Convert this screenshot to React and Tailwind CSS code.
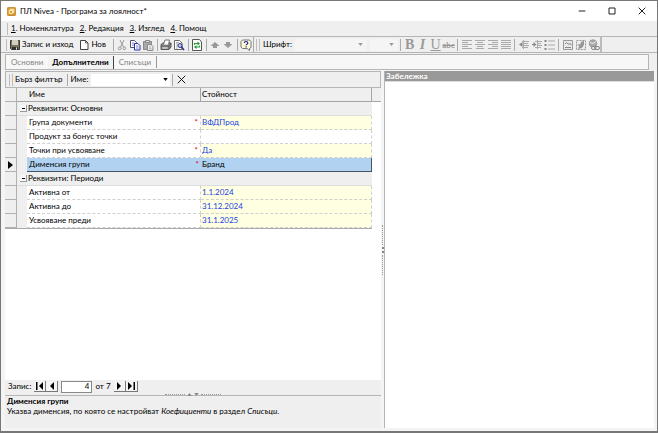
import { useState } from 'react';

const groups = [
  {
    title: 'Реквизити: Основни',
    rows: [
      { name: 'Група документи', value: 'ВФДПрод', required: true },
      { name: 'Продукт за бонус точки', value: '' },
      { name: 'Точки при усвояване', value: 'Да', required: true },
      { name: 'Дименсия групи', value: 'Бранд', required: true },
    ],
  },
  {
    title: 'Реквизити: Периоди',
    rows: [
      { name: 'Активна от', value: '1.1.2024' },
      { name: 'Активна до', value: '31.12.2024' },
      { name: 'Усвояване преди', value: '31.1.2025' },
    ],
  },
];

const Svg = ({ children, className = 'w-3 h-3' }) => (
  <svg viewBox="0 0 12 12" className={`${className} shrink-0`} fill="none" stroke="currentColor">
    {children}
  </svg>
);

const SaveIcon = () => (
  <Svg>
    <path d="M1.5 1.5h9v9h-8l-1-1z" fill="#77735c" stroke="#3a3a30" />
    <path d="M3 1h6v5H3z" fill="#d2d0bd" stroke="none" />
    <path d="M3 8h6v3H3z" fill="#33332d" stroke="none" />
    <path d="M7 8.500h1v2H7z" fill="#eee" stroke="none" />
  </Svg>
);

const NewIcon = () => (
  <Svg>
    <path d="M2.500 1.500h5l2.500 2.500v6.500H2.500z" fill="#fff" stroke="#444" />
    <path d="M7.500 1.500V4H10" stroke="#444" strokeWidth=".8" />
  </Svg>
);

const CutIcon = () => (
  <Svg>
    <path d="M4 1l3.500 7M8 1L4.500 8" stroke="#999" />
    <circle cx="3.700" cy="9.300" r="1.400" stroke="#999" />
    <circle cx="8.300" cy="9.300" r="1.400" stroke="#999" />
  </Svg>
);

const CopyIcon = () => (
  <Svg>
    <path d="M1.500 1.500h4l2 2v5h-6z" fill="#fff" stroke="#505078" />
    <path d="M5.500 4.500h3.500l2 2v4.500H5.500z" fill="#fff" stroke="#2930a5" />
    <path d="M3 4h2M3 6h2M7 7h2.500M7 9h2.500" stroke="#5961bd" strokeWidth=".8" />
  </Svg>
);

const PasteIcon = () => (
  <Svg>
    <path d="M1.500 2.500h8v8h-8z" fill="#aaa" stroke="#888" />
    <path d="M3.500 1.500h4v2h-4z" fill="#ddd" stroke="#888" />
    <path d="M5.500 5.500h3.500l2 2v4H5.500z" fill="#eee" stroke="#888" />
    <path d="M7 8h2M7 9.800h2.500" stroke="#999" strokeWidth=".8" />
  </Svg>
);

const PrintIcon = () => (
  <Svg>
    <path d="M1 5.500L3 4h8v4l-2 2.500H1z" fill="#9a9a9a" stroke="#555" />
    <path d="M3.500 5.500L5 1h4.500L8.500 5.500" fill="#fff" stroke="#555" strokeWidth=".8" />
    <path d="M1 7h8l2-2.500M9 7v3" stroke="#444" strokeWidth=".8" />
    <path d="M2.500 9h5" stroke="#e4e4e4" />
  </Svg>
);

const PreviewIcon = () => (
  <Svg>
    <path d="M1.500 1.500h5L9 4v6.500H1.500z" fill="#fff" stroke="#666" />
    <path d="M3 3.500h3M3 5h2M3 7h2M3 9h2" stroke="#888" strokeWidth=".7" />
    <circle cx="7" cy="6.500" r="2" fill="#bcd" stroke="#303795" />
    <path d="M8.500 8l2.500 3" stroke="#252b87" strokeWidth="1.500" />
  </Svg>
);

const RefreshIcon = () => (
  <Svg>
    <path d="M1.500 .5h7L10.500 3v8.500h-9z" fill="#fff" stroke="#555" />
    <path d="M3.500 6V4.500h4M8.500 6.500V8h-4" stroke="#23a138" strokeWidth="1.200" />
    <path d="M6.500 2.500l2.500 2-2.500 2zM5.500 6L3 8l2.500 2z" fill="#179a31" stroke="none" />
  </Svg>
);

const UpIcon = () => (
  <Svg>
    <path d="M6 3l4.500 4H8v2H4V7H1.500z" fill="#999" stroke="none" />
  </Svg>
);

const DownIcon = () => (
  <Svg>
    <path d="M6 9L1.500 5H4V3h4v2h2.500z" fill="#999" stroke="none" />
  </Svg>
);

const HelpIcon = () => (
  <Svg>
    <path d="M2.500 1h7l1.500 1.500v6L9.500 9.500v2L7 9.500H2.500L1 8V2.500z" fill="#fffbd2" stroke="#666" strokeWidth=".9" />
    <path d="M4.300 4c0-2 3.500-2 3.500 0 0 1.300-1.700 1.100-1.700 2.300M6.100 7.300v1.200" stroke="#2526a5" strokeWidth="1.200" />
  </Svg>
);

const alignPaths = {
  left: 'M1 1.500h10M1 3.500h6M1 5.500h10M1 7.500h6M1 9.500h10',
  center: 'M1 1.500h10M3 3.500h6M1 5.500h10M3 7.500h6M2 9.500h8',
  right: 'M1 1.500h10M5 3.500h6M1 5.500h10M5 7.500h6M1 9.500h10',
  justify: 'M1 1.500h10M1 3.500h10M1 5.500h10M1 7.500h10M1 9.500h10',
};

const AlignIcon = ({ kind }) => (
  <Svg>
    <path d={alignPaths[kind]} stroke="#aaa" />
  </Svg>
);

const OutdentIcon = () => (
  <Svg>
    <path d="M4 2.500h7M6 4.500h4M6 6.500h5M4 8.500h6M5.500 1v9" stroke="#aaa" />
    <path d="M4.500 3L1 5.500 4.500 8z" fill="#888" stroke="none" />
  </Svg>
);

const IndentIcon = () => (
  <Svg>
    <path d="M4 2.500h7M7 4.500h3M7 6.500h4M4 8.500h6M6.500 1v9" stroke="#aaa" />
    <path d="M1 5.500h2" stroke="#888" />
    <path d="M2.500 3L5.500 5.500 2.500 8z" fill="#888" stroke="none" />
  </Svg>
);

const BulletsIcon = () => (
  <Svg>
    <path d="M4 2h7M4 6h7M4 10h7" stroke="#aaa" />
    <path d="M.5 1h2v2h-2zM.5 5h2v2h-2zM.5 9h2v2h-2z" fill="#888" stroke="none" />
  </Svg>
);

const PictureIcon = () => (
  <Svg>
    <path d="M1.500 1.500h9v9h-9z" fill="#e8e8e8" stroke="#999" />
    <path d="M3 5l1.500-1.500L6 5h3v1M3 8.500h6" stroke="#888" />
  </Svg>
);

const ObjectIcon = () => (
  <Svg>
    <path d="M1.500 1.500h9v9h-9z" stroke="#999" strokeDasharray="2 1" />
    <path d="M6 3l3-1.500V6L7 9 3 10l1-3-2-2 3 .5z" fill="#999" stroke="none" />
  </Svg>
);

const LinkIcon = () => (
  <Svg>
    <circle cx="5" cy="4.500" r="3.700" fill="#aaa" stroke="#999" />
    <path d="M2 3.500l3 1 3-2" stroke="#eee" />
    <rect x="3.500" y="7.500" width="4.500" height="3" rx="1.500" fill="#eee" stroke="#888" />
    <rect x="6.500" y="7.500" width="5" height="3" rx="1.500" stroke="#888" />
  </Svg>
);

const AppIcon = () => (
  <Svg className="w-[9px] h-[9px]">
    <rect x=".5" y=".5" width="11" height="11" rx="1.500" fill="#d99a28" stroke="#b67a17" />
    <path d="M3 4.500h4.500v4H3zM4.500 4.500V3H9v4H7.500" stroke="#fff3d6" strokeWidth="1.300" />
  </Svg>
);

const Caret = ({ className = '' }) => (
  <svg viewBox="0 0 6 4" className={`w-[5px] h-[3px] shrink-0 ${className}`}>
    <path d="M0 0h6L3 4z" fill="currentColor" />
  </svg>
);

const Grip = () => <span className="w-1 h-3 shrink-0 border-x border-[#bdbdbd]" />;
const Sep = () => <span className="w-px h-3 shrink-0 mx-[2px] bg-[#aaa]" />;

const ToolButton = ({ label, children, className = 'w-[13px]' }) => (
  <button aria-label={label} className={`flex items-center justify-center shrink-0 h-[15px] ${className}`}>
    {children}
  </button>
);

const TitleBar = () => (
  <header className="flex items-center h-5 shrink-0 bg-white pl-[6px]">
    <AppIcon />
    <h1 className="ml-1 flex-1">ПЛ Nivea - Програма за лоялност*</h1>
    <div className="flex text-[#222]">
      <ToolButton label="Минимизирай" className="w-[30px]">
        <Svg className="w-2 h-2"><path d="M1 6h10" strokeWidth="1.500" /></Svg>
      </ToolButton>
      <ToolButton label="Максимизирай" className="w-[30px]">
        <Svg className="w-2 h-2"><path d="M1.500 1.500h9v9h-9z" strokeWidth="1.500" /></Svg>
      </ToolButton>
      <ToolButton label="Затвори" className="w-[30px]">
        <Svg className="w-2 h-2"><path d="M1 1l10 10M11 1L1 11" strokeWidth="1.500" /></Svg>
      </ToolButton>
    </div>
  </header>
);

const menu = ['Номенклатура', 'Редакция', 'Изглед', 'Помощ'];

const MenuBar = () => (
  <nav className="flex items-center gap-[6px] h-[15px] shrink-0 pl-[3px]">
    <span className="w-1 h-3 -mr-[3px] border-r border-[#bdbdbd]" />
    {menu.map((item, i) => (
      <button key={item}>
        <u>{i + 1}</u>. {item}
      </button>
    ))}
  </nav>
);

const Toolbar = () => (
  <div className="flex h-[17px] shrink-0 border-y border-[#b5b5b5] pl-[2px]">
    <div className="flex items-center border-r border-[#aaa]">
      <span className="w-1 h-3 border-r border-[#bdbdbd]" />
      <button className="flex items-center gap-px ml-[2px] whitespace-nowrap"><SaveIcon />Запис и изход</button>
      <button className="flex items-center gap-px ml-[5px] mr-[5px]"><NewIcon />Нов</button>
      <Sep />
      <ToolButton label="Изрежи"><CutIcon /></ToolButton>
      <ToolButton label="Копирай"><CopyIcon /></ToolButton>
      <ToolButton label="Постави"><PasteIcon /></ToolButton>
      <Sep />
      <ToolButton label="Печат"><PrintIcon /></ToolButton>
      <ToolButton label="Преглед"><PreviewIcon /></ToolButton>
      <Sep />
      <ToolButton label="Обнови"><RefreshIcon /></ToolButton>
      <Sep />
      <ToolButton label="Нагоре"><UpIcon /></ToolButton>
      <ToolButton label="Надолу"><DownIcon /></ToolButton>
      <Sep />
      <ToolButton label="Помощ"><HelpIcon /></ToolButton>
    </div>
    <div className="flex items-center border-r-2 border-[#bbb] pl-[2px] text-[#999]">
      <Grip />
      <span className="mx-[3px] text-black">Шрифт:</span>
      <button aria-label="Шрифт" className="flex items-center justify-end w-[72px] h-3 pr-1 bg-[#f5f5f5]"><Caret /></button>
      <button aria-label="Размер" className="flex items-center justify-end w-7 h-3 pr-1 ml-[3px] bg-[#f5f5f5]"><Caret /></button>
      <Sep />
      <div className="flex items-center font-['Liberation_Serif',serif] text-sm leading-none text-[#999]">
        <button className="w-[13px] font-bold">B</button>
        <button className="w-[13px] font-bold italic">I</button>
        <button className="w-[13px] underline">U</button>
        <button className="w-[13px] font-['Lato',sans-serif] text-[8px] font-bold line-through">abc</button>
      </div>
      <Sep />
      <ToolButton label="Ляво"><AlignIcon kind="left" /></ToolButton>
      <ToolButton label="Център"><AlignIcon kind="center" /></ToolButton>
      <ToolButton label="Дясно"><AlignIcon kind="right" /></ToolButton>
      <ToolButton label="Двустранно"><AlignIcon kind="justify" /></ToolButton>
      <Sep />
      <ToolButton label="Намали отстъп"><OutdentIcon /></ToolButton>
      <ToolButton label="Увеличи отстъп"><IndentIcon /></ToolButton>
      <ToolButton label="Списък"><BulletsIcon /></ToolButton>
      <Sep />
      <ToolButton label="Картина"><PictureIcon /></ToolButton>
      <ToolButton label="Обект"><ObjectIcon /></ToolButton>
      <ToolButton label="Връзка"><LinkIcon /></ToolButton>
    </div>
  </div>
);

const tabs = ['Основни', 'Допълнителни', 'Списъци'];

const Tabs = ({ active, onChange }) => (
  <div role="tablist" className="flex h-4 shrink-0 mt-px ml-1 mr-2 border border-[#b5b5b5] bg-[#f7f7f7] pt-px">
    {tabs.map((tab) => (
      <button
        key={tab}
        role="tab"
        aria-selected={tab === active}
        onClick={() => onChange(tab)}
        className={
          tab === active
            ? 'px-1 border-r border-[#444] bg-[#f2f2f2] font-bold'
            : 'px-[5px] h-3 text-[#858585] last:border-r last:border-[#999]'
        }
      >
        {tab}
      </button>
    ))}
  </div>
);

const FilterBar = () => (
  <div className="flex items-center h-[17px] shrink-0 border border-[#b5b5b5] pl-[3px]">
    <Grip />
    <button className="mx-[2px] whitespace-nowrap">Бърз филтър</button>
    <Sep />
    <label htmlFor="filter-name" className="ml-px">Име:</label>
    <div className="flex items-center w-[79px] h-3 ml-[3px] bg-white">
      <input id="filter-name" className="flex-1 min-w-0 h-3 outline-none" />
      <Caret className="mr-[2px]" />
    </div>
    <Sep />
    <ToolButton label="Изчисти">
      <Svg className="w-[9px] h-[9px]"><path d="M1 1l10 10M11 1L1 11" strokeWidth="1.200" /></Svg>
    </ToolButton>
  </div>
);

const marker = 'h-[14px] p-0 border-r border-b border-[#b0b0b0] bg-[#efefef]';

const PropertyGrid = ({ selected, onSelect }) => (
  <div className="flex-1 min-h-0 bg-white">
    <table className="w-full table-fixed border-separate border-spacing-0 text-left">
      <colgroup>
        <col className="w-3" />
        <col className="w-[10px]" />
        <col />
        <col className="w-[171px]" />
        <col className="w-[9px]" />
      </colgroup>
      <thead>
        <tr className="bg-[#efefef]">
          <th className={marker} />
          <th className="p-0 border-b border-[#a5a5a5]" />
          <th className="p-0 pl-[2px] border-b border-r border-[#a5a5a5] font-normal">Име</th>
          <th className="p-0 pl-px border-b border-r border-[#a5a5a5] font-normal">Стойност</th>
          <th className="p-0 border-b border-[#a5a5a5]" />
        </tr>
      </thead>
      {groups.map((group) => (
        <tbody key={group.title}>
          <tr>
            <td className={marker} />
            <td colSpan={3} className="p-0 bg-[#efefef] border-b border-[#ddd]">
              <div className="flex items-center pl-[3px]">
                <button aria-label="Свий" className="flex items-center justify-center w-[7px] h-[7px] mr-px border-r border-b border-[#999] bg-[#f7f7f7]">
                  <span className="w-[3px] h-px bg-black" />
                </button>
                {group.title}
              </div>
            </td>
            <td />
          </tr>
          {group.rows.map((row) => {
            const isSelected = row.name === selected;
            return (
              <tr key={row.name} onClick={() => onSelect(row.name)}>
                <td className={marker}>
                  {isSelected && (
                    <svg viewBox="0 0 5 8" className="w-[5px] h-2 mx-auto">
                      <path d="M0 0l5 4-5 4z" />
                    </svg>
                  )}
                </td>
                <td className="p-0 bg-[#efefef]" />
                <td
                  className={`p-0 border-b ${
                    isSelected
                      ? 'border-[#456] bg-[#b1d3f1]'
                      : 'border-r border-dashed border-[#d0d0d0]'
                  }`}
                >
                  <div className="flex justify-between pl-[2px] pr-[2px] whitespace-nowrap">
                    {row.name}
                    {row.required && <span className="text-red-600">*</span>}
                  </div>
                </td>
                <td
                  className={`p-0 pl-px border-b border-r ${
                    isSelected
                      ? 'border-[#456] bg-[#b1d3f1]'
                      : `border-dashed border-[#d0d0d0] text-[#1c42e8] ${row.value ? 'bg-[#ffffe1]' : ''}`
                  }`}
                >
                  {row.value}
                </td>
                <td />
              </tr>
            );
          })}
        </tbody>
      ))}
    </table>
    <div className="h-px mr-[9px] bg-[#aaa]" />
  </div>
);

const NavButton = ({ label, d }) => (
  <button aria-label={label} className="flex items-center justify-center w-3 h-[11px] border-r border-b border-[#777] bg-[#f4f4f4]">
    <svg viewBox="0 0 10 8" className="w-[10px] h-2"><path d={d} /></svg>
  </button>
);

const RecordBar = () => (
  <div className="flex items-center h-[13px] shrink-0 pl-[3px]">
    <label htmlFor="record" className="mr-[3px]">Запис:</label>
    <NavButton label="Първи" d="M1 0h1.500v8H1zM8 0v8L4 4z" />
    <NavButton label="Предишен" d="M7 0v8L3 4z" />
    <input
      id="record"
      defaultValue="4"
      className="w-[31px] h-3 mx-[3px] pr-[2px] border border-[#888] bg-white text-right"
    />
    <span className="mr-[3px] whitespace-nowrap">от 7</span>
    <NavButton label="Следващ" d="M3 0v8l4-4z" />
    <NavButton label="Последен" d="M2 0v8l4-4zM7.500 0H9v8H7.500z" />
  </div>
);

export default function App() {
  const [tab, setTab] = useState('Допълнителни');
  const [selected, setSelected] = useState('Дименсия групи');

  return (
    <div
      lang="bg"
      className="flex flex-col h-screen border border-b-2 border-[#777] bg-[#efefef] font-['Lato',sans-serif] text-[8px] leading-[13px] text-black"
    >
      <TitleBar />
      <MenuBar />
      <Toolbar />
      <Tabs active={tab} onChange={setTab} />
      <main className="flex flex-1 min-h-0 bg-[#f4f4f4] pt-px pl-1 pr-[3px] pb-[3px]">
        <section className="flex flex-col flex-[376_1_0%] min-w-0 bg-[#efefef]">
          <FilterBar />
          <PropertyGrid selected={selected} onSelect={setSelected} />
          <RecordBar />
          <div className="flex items-center justify-center gap-[2px] h-[3px] shrink-0 border-b border-[#b5b5b5]">
            <span className="w-5 border-t border-dotted border-[#999]" />
            <Caret className="rotate-180 text-[#888]" />
            <Caret className="text-[#888]" />
            <span className="w-5 border-t border-dotted border-[#999]" />
          </div>
          <div className="h-8 shrink-0 pl-[2px] leading-[10px]">
            <h2 className="font-bold">Дименсия групи</h2>
            <p>
              Указва дименсия, по която се настройват <i>Коефициенти</i> в раздел <i>Списъци</i>.
            </p>
          </div>
        </section>
        <div className="flex flex-col items-center justify-center gap-[2px] w-1 shrink-0 border-r border-[#b5b5b5]">
          <span className="h-5 border-l border-dotted border-[#999]" />
          <span className="w-[2px] h-[2px] bg-[#888]" />
          <span className="w-[2px] h-[2px] bg-[#888]" />
          <span className="h-5 border-l border-dotted border-[#999]" />
        </div>
        <section className="flex flex-col flex-[269_1_0%] min-w-0 bg-white">
          <h2 className="h-[10px] shrink-0 pl-px bg-[#999] text-white font-bold leading-[10px]">Забележка</h2>
          <textarea aria-label="Забележка" className="flex-1 w-full resize-none outline-none border-t border-[#ddd]" />
        </section>
      </main>
    </div>
  );
}
